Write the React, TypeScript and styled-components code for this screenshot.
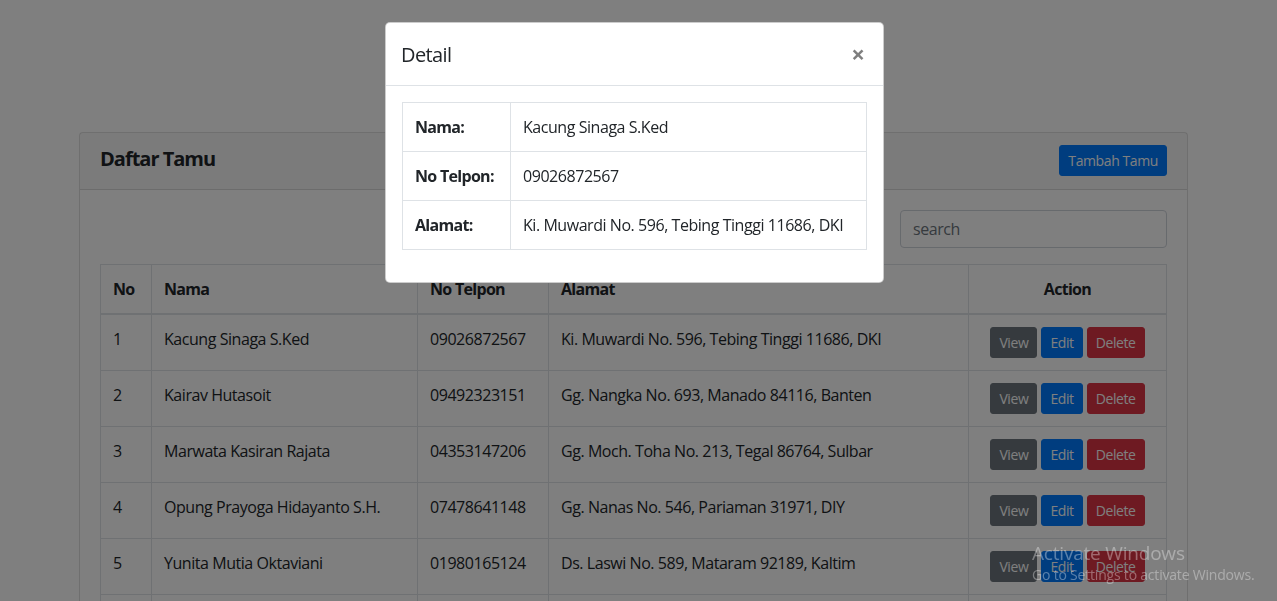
import { createGlobalStyle } from "styled-components";
import styled from "styled-components";

interface Tamu {
  nama: string;
  telpon: string;
  alamat: string;
}

const tamuList: Tamu[] = [
  { nama: "Kacung Sinaga S.Ked", telpon: "09026872567", alamat: "Ki. Muwardi No. 596, Tebing Tinggi 11686, DKI" },
  { nama: "Kairav Hutasoit", telpon: "09492323151", alamat: "Gg. Nangka No. 693, Manado 84116, Banten" },
  { nama: "Marwata Kasiran Rajata", telpon: "04353147206", alamat: "Gg. Moch. Toha No. 213, Tegal 86764, Sulbar" },
  { nama: "Opung Prayoga Hidayanto S.H.", telpon: "07478641148", alamat: "Gg. Nanas No. 546, Pariaman 31971, DIY" },
  { nama: "Yunita Mutia Oktaviani", telpon: "01980165124", alamat: "Ds. Laswi No. 589, Mataram 92189, Kaltim" },
  { nama: "Gawati Wulandari", telpon: "08123456789", alamat: "Jr. Sudirman No. 12, Bandung 40111, Jabar" },
];

const GlobalStyle = createGlobalStyle`
  html, body {
    margin: 0;
    overflow: hidden;
  }
  body {
    font-family: "Open Sans", "Noto Sans", sans-serif;
    font-size: 16px;
    line-height: 1.5;
    letter-spacing: -0.45px;
    color: #212529;
    background: #fff;
  }
  * {
    box-sizing: border-box;
  }
`;

const Container = styled.div`
  width: 1109px;
  margin-left: 79px;
  padding-top: 132px;
`;

const Card = styled.div`
  border: 1px solid rgba(0, 0, 0, 0.125);
  border-radius: 4px;
  background: #fff;
`;

const CardHeader = styled.div`
  display: flex;
  justify-content: space-between;
  align-items: center;
  padding: 12px 20px 13px;
  background: rgba(0, 0, 0, 0.03);
  border-bottom: 1px solid rgba(0, 0, 0, 0.125);
`;

const CardTitle = styled.h5`
  margin: 0 0 3px;
  font-size: 20px;
  font-weight: 700;
  line-height: 1.2;
  letter-spacing: -1px;
`;

const Button = styled.button<{ $variant: "primary" | "secondary" | "danger" }>`
  display: inline-block;
  font-family: inherit;
  font-size: 14px;
  line-height: 1.5;
  letter-spacing: -0.4px;
  padding: 4px 8px;
  border-radius: 3px;
  border: 1px solid transparent;
  color: #fff;
  cursor: pointer;
  background: ${(p) =>
    p.$variant === "primary" ? "#007bff" : p.$variant === "danger" ? "#dc3545" : "#6c757d"};
  border-color: ${(p) =>
    p.$variant === "primary" ? "#007bff" : p.$variant === "danger" ? "#dc3545" : "#6c757d"};
`;

const CardBody = styled.div`
  padding: 20px;
`;

const SearchRow = styled.div`
  display: flex;
  justify-content: flex-end;
  margin-bottom: 16px;
`;

const SearchInput = styled.input`
  width: 267px;
  height: 38px;
  padding: 6px 12px;
  font-family: inherit;
  font-size: 16px;
  letter-spacing: -0.45px;
  color: #495057;
  border: 1px solid #ced4da;
  border-radius: 4px;
  outline: none;
  &::placeholder {
    color: #6c757d;
  }
`;

const Table = styled.table`
  width: 100%;
  border-collapse: collapse;
  border: 1px solid #dee2e6;

  th,
  td {
    padding: 12px;
    border: 1px solid #dee2e6;
    vertical-align: top;
    text-align: left;
  }
  thead th {
    border-bottom: 2px solid #dee2e6;
    vertical-align: bottom;
    font-weight: 700;
    letter-spacing: -0.7px;
    white-space: nowrap;
  }
`;

const ActionCell = styled.td`
  && {
    text-align: center;
  }
`;

const ActionHead = styled.th`
  && {
    text-align: center;
  }
`;

const Actions = styled.div`
  display: flex;
  justify-content: center;
  gap: 4px;
`;

const Backdrop = styled.div`
  position: fixed;
  inset: 0;
  background: rgba(0, 0, 0, 0.5);
`;

const Modal = styled.div`
  position: fixed;
  top: 22px;
  left: 385px;
  width: 499px;
  background: #fff;
  border: 1px solid rgba(0, 0, 0, 0.2);
  border-radius: 5px;
`;

const ModalHeader = styled.div`
  display: flex;
  justify-content: space-between;
  align-items: flex-start;
  padding: 16px 16px 16px 15px;
  border-bottom: 1px solid #dee2e6;
`;

const ModalTitle = styled.h5`
  margin: 0;
  font-size: 20px;
  font-weight: 500;
  line-height: 1.5;
  letter-spacing: -0.6px;
  position: relative;
  top: 1px;
`;

const CloseButton = styled.button`
  background: transparent;
  border: 0;
  padding: 19px 18px 13px 16px;
  margin: -16px -16px -16px auto;
  font-family: inherit;
  font-size: 24px;
  font-weight: 700;
  line-height: 1;
  color: #000;
  opacity: 0.5;
  text-shadow: 0 1px 0 #fff;
  cursor: pointer;
`;

const ModalBody = styled.div`
  padding: 16px;
`;

const DetailTable = styled.table`
  width: 100%;
  border-collapse: collapse;
  border: 1px solid #dee2e6;
  margin-bottom: 16px;

  th,
  td {
    padding: 12px;
    border: 1px solid #dee2e6;
    text-align: left;
    vertical-align: top;
    white-space: nowrap;
  }
  th {
    width: 108px;
    font-weight: 700;
    letter-spacing: -0.7px;
  }
`;

const Watermark = styled.div`
  position: fixed;
  left: 1032px;
  top: 540px;
  color: rgba(255, 255, 255, 0.35);
  letter-spacing: -0.2px;
  pointer-events: none;
`;

const WatermarkTitle = styled.div`
  font-size: 19px;
  line-height: 26px;
`;

const WatermarkText = styled.div`
  font-size: 14px;
  line-height: 18px;
`;

export default function App() {
  const selected = tamuList[0];
  return (
    <>
      <GlobalStyle />
      <Container>
        <Card>
          <CardHeader>
            <CardTitle>Daftar Tamu</CardTitle>
            <Button $variant="primary">Tambah Tamu</Button>
          </CardHeader>
          <CardBody>
            <SearchRow>
              <SearchInput placeholder="search" />
            </SearchRow>
            <Table>
              <thead>
                <tr>
                  <th style={{ width: 51 }}>No</th>
                  <th style={{ width: 266 }}>Nama</th>
                  <th style={{ width: 131 }}>No Telpon</th>
                  <th>Alamat</th>
                  <ActionHead style={{ width: 198 }}>Action</ActionHead>
                </tr>
              </thead>
              <tbody>
                {tamuList.map((t, i) => (
                  <tr key={t.telpon}>
                    <td>{i + 1}</td>
                    <td>{t.nama}</td>
                    <td>{t.telpon}</td>
                    <td>{t.alamat}</td>
                    <ActionCell>
                      <Actions>
                        <Button $variant="secondary">View</Button>
                        <Button $variant="primary">Edit</Button>
                        <Button $variant="danger">Delete</Button>
                      </Actions>
                    </ActionCell>
                  </tr>
                ))}
              </tbody>
            </Table>
          </CardBody>
        </Card>
      </Container>
      <Backdrop />
      <Modal>
        <ModalHeader>
          <ModalTitle>Detail</ModalTitle>
          <CloseButton aria-label="Close">×</CloseButton>
        </ModalHeader>
        <ModalBody>
          <DetailTable>
            <tbody>
              <tr>
                <th>Nama:</th>
                <td>{selected.nama}</td>
              </tr>
              <tr>
                <th>No Telpon:</th>
                <td>{selected.telpon}</td>
              </tr>
              <tr>
                <th>Alamat:</th>
                <td>{selected.alamat}</td>
              </tr>
            </tbody>
          </DetailTable>
        </ModalBody>
      </Modal>
      <Watermark>
        <WatermarkTitle>Activate Windows</WatermarkTitle>
        <WatermarkText>Go to Settings to activate Windows.</WatermarkText>
      </Watermark>
    </>
  );
}
